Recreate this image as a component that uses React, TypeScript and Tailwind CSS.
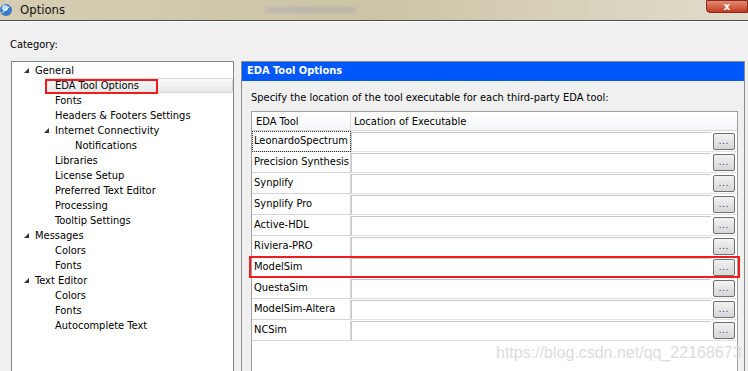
import React from "react";

const tree: { label: string; level: number; arrow?: boolean; selected?: boolean }[] = [
  { label: "General", level: 0, arrow: true },
  { label: "EDA Tool Options", level: 1, selected: true },
  { label: "Fonts", level: 1 },
  { label: "Headers & Footers Settings", level: 1 },
  { label: "Internet Connectivity", level: 1, arrow: true },
  { label: "Notifications", level: 2 },
  { label: "Libraries", level: 1 },
  { label: "License Setup", level: 1 },
  { label: "Preferred Text Editor", level: 1 },
  { label: "Processing", level: 1 },
  { label: "Tooltip Settings", level: 1 },
  { label: "Messages", level: 0, arrow: true },
  { label: "Colors", level: 1 },
  { label: "Fonts", level: 1 },
  { label: "Text Editor", level: 0, arrow: true },
  { label: "Colors", level: 1 },
  { label: "Fonts", level: 1 },
  { label: "Autocomplete Text", level: 1 },
];

const tools = [
  "LeonardoSpectrum",
  "Precision Synthesis",
  "Synplify",
  "Synplify Pro",
  "Active-HDL",
  "Riviera-PRO",
  "ModelSim",
  "QuestaSim",
  "ModelSim-Altera",
  "NCSim",
];

const indent = ["pl-[23px]", "pl-[43px]", "pl-[63px]"];

function Arrow() {
  return (
    <svg width="7" height="7" viewBox="0 0 7 7" className="absolute -left-[12px] top-[4px]">
      <path d="M6 1 L6 6 L1 6 Z" fill="#333" />
    </svg>
  );
}

function BrowseButton() {
  return (
    <div className="flex h-[17px] w-[22px] shrink-0 items-end justify-center rounded-[2px] border border-[#707070] bg-gradient-to-b from-[#f2f2f2] to-[#d6d6d6] pb-[3px]">
      <span className="text-[9px] leading-none tracking-[1px] text-[#1a1a5a]">...</span>
    </div>
  );
}

export default function App() {
  return (
    <div
      className="relative h-[371px] w-[748px] overflow-hidden bg-[#f0f0f0] text-[11px] text-black"
      style={{ fontFamily: "Tahoma, 'DejaVu Sans Condensed', 'Liberation Sans', sans-serif" }}
    >
      {/* title bar */}
      <div className="relative flex h-[21px] items-center border-b border-[#4a4a4a] bg-gradient-to-r from-[#d6ceb4] via-[#cdc4a6] to-[#e2dccb]">
        <svg width="13" height="14" viewBox="0 0 13 14">
          <circle cx="6" cy="7" r="6" fill="#3a78c8" />
          <circle cx="5" cy="5" r="3" fill="#bfe0ff" />
          <path d="M2 10 L10 3" stroke="#fff" strokeWidth="1" />
        </svg>
        <span className="ml-[7px] text-[13px] text-[#111]">Options</span>
        <div className="ml-[200px] h-[4px] w-[90px] rounded bg-[#6a78b8] opacity-30 blur-[2px]" />
        <div className="absolute right-0 top-0 flex h-[13px] w-[42px] items-center justify-center rounded-bl-[4px] border border-[#8a2a1a] bg-gradient-to-b from-[#e08a70] to-[#c2391e]">
          <span className="text-[11px] font-bold leading-none text-white">x</span>
        </div>
      </div>
      <div className="h-px bg-white" />

      <div className="pl-[10px] pt-[16px] leading-[14px]">Category:</div>

      <div className="mt-[9px] flex items-start">
        {/* tree */}
        <div className="ml-[11px] h-[330px] w-[223px] border border-[#828790] bg-white pt-[1px]">
          {tree.map((t, i) => (
            <div key={i} className={`relative h-[15px] leading-[15px] ${indent[t.level]}`}>
              {t.selected && (
                <div className="absolute left-[33px] right-0 top-0 h-[15px] rounded-[2px] border border-[#d8d8d8] bg-gradient-to-b from-[#f8f8f8] to-[#e8e8e8]" />
              )}
              {t.selected && (
                <div className="absolute left-[33px] top-[1px] h-[15px] w-[113px] border-2 border-[#ee1c1c]" />
              )}
              <span className="relative inline-block whitespace-nowrap">
                {t.arrow && <Arrow />}
                {t.label}
              </span>
            </div>
          ))}
        </div>

        {/* right panel */}
        <div className="ml-[7px] h-[330px] w-[504px] border border-[#8c8c8c]">
          <div className="flex h-[19px] items-center bg-[#0058fa] pl-[5px] font-bold text-white">EDA Tool Options</div>
          <div className="pl-[9px] pt-[10px] leading-[14px]">
            Specify the location of the tool executable for each third-party EDA tool:
          </div>
          <div className="ml-[9px] mt-[6px] h-[280px] w-[487px] border border-[#a0a0a0] bg-white">
            <div className="flex h-[19px] border-b border-[#d5d5d5] bg-gradient-to-b from-white to-[#f4f5f7]">
              <div className="w-[99px] border-r border-[#d5d5d5] pl-[4px] leading-[19px]">EDA Tool</div>
              <div className="pl-[3px] leading-[19px]">Location of Executable</div>
            </div>
            {tools.map((tool, i) => (
              <div key={tool} className="relative flex h-[21px]">
                {tool === "ModelSim" && (
                  <div className="pointer-events-none absolute -left-[3px] -right-[3px] -top-[1px] z-10 h-[22px] border-2 border-[#ee1c1c]" />
                )}
                <div
                  className={`w-[99px] border-b border-r border-[#d5d5d5] pl-[2px] leading-[20px] ${
                    i === 0 ? "outline-1 -outline-offset-1 outline-dotted outline-[#333]" : ""
                  }`}
                >
                  {tool}
                </div>
                <div className="flex flex-1 items-center gap-[2px] border-b border-[#e0e0e0] pr-[2px]">
                  <div className="h-[19px] flex-1 border-t border-l border-[#c8c8c8] bg-white" />
                  <BrowseButton />
                </div>
              </div>
            ))}
          </div>
        </div>
      </div>

      {/* watermark */}
      <div
        className="absolute left-[496px] top-[341px] text-[16px] text-[#dcdcdc]"
        style={{ fontFamily: "'Liberation Sans', Arial, sans-serif" }}
      >
        https://blog.csdn.net/qq_22168673
      </div>
    </div>
  );
}
